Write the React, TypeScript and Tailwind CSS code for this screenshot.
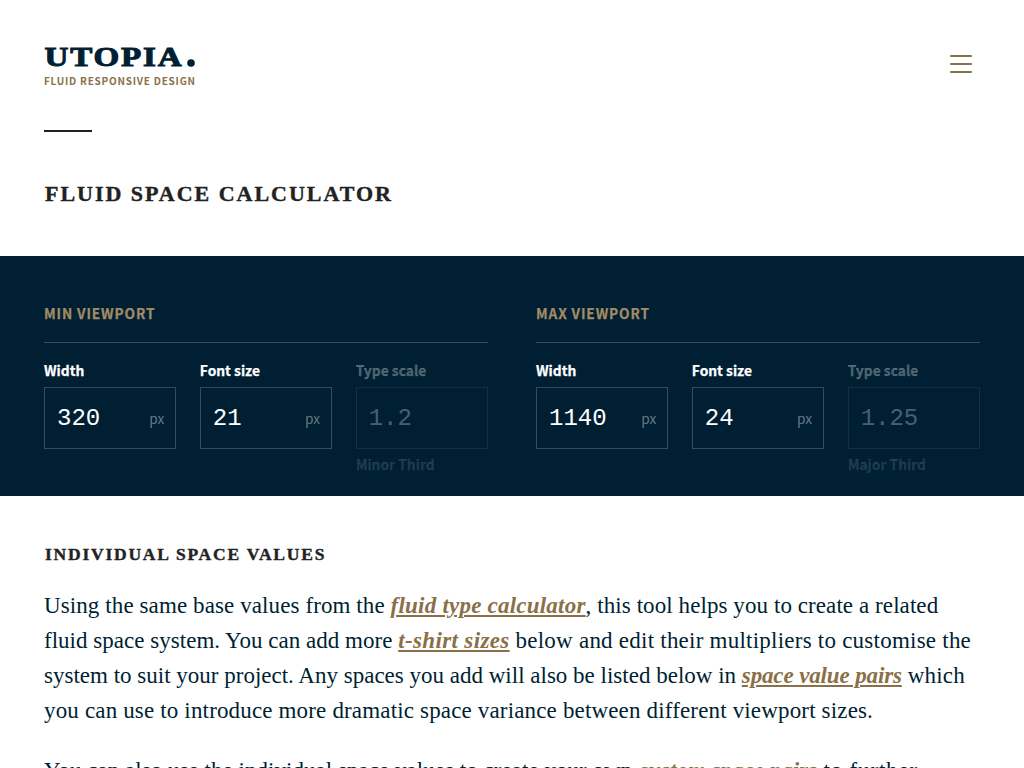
import type { ReactNode } from "react";

function Field({ label, value, unit, note, disabled }: { label: string; value: string; unit?: string; note?: string; disabled?: boolean }) {
  return (
    <div className="flex flex-col">
      <label className={disabled ? "h-[24px] text-[13.8px] leading-[24px] font-bold text-white/30 [-webkit-text-stroke:0.25px]" : "h-[24px] text-[13.8px] leading-[24px] font-bold text-white [-webkit-text-stroke:0.25px]"}>{label}</label>
      <div
        className={
          disabled
            ? "mt-[5px] flex h-[62px] items-center justify-between border border-white/8 pr-[11px] pl-3 text-white/30"
            : "mt-[5px] flex h-[62px] items-center justify-between border border-white/20 pr-[11px] pl-3 text-white"
        }
      >
        <span className="pt-px font-['Liberation_Mono',monospace] text-[24px] leading-[30px]">{value}</span>
        {unit && <span className="pb-px text-[13.7px] leading-[20px] text-white/40">{unit}</span>}
      </div>
      {note && <div className="mt-[3px] text-[13.8px] leading-[24px] font-bold text-white/12 [-webkit-text-stroke:0.25px]">{note}</div>}
    </div>
  );
}

function Viewport({ title, children }: { title: string; children: ReactNode }) {
  return (
    <section>
      <h3 className="h-[40px] border-b border-white/20 text-[13.7px] leading-[20px] font-bold tracking-[0.88px] text-[#a18c66] [-webkit-text-stroke:0.25px]">{title}</h3>
      <div className="mt-[15px] grid grid-cols-3 gap-[23.5px]">{children}</div>
    </section>
  );
}

function Link({ className, children }: { className: string; children: ReactNode }) {
  return (
    <a href="#" className={`font-bold italic text-[#8a7048] underline decoration-2 underline-offset-[2px] ${className}`}>
      {children}
    </a>
  );
}

export default function App() {
  return (
    <div className="h-[768px] overflow-hidden bg-white font-['Noto_Sans_CJK_SC','Noto_Sans',sans-serif] text-[#001f33]">
      <header className="flex h-[130px] justify-between pt-[44px] pr-[52px] pl-[44px]">
        <div className="flex flex-col">
          <svg width="153" height="26" viewBox="0 0 153 26" className="overflow-visible">
            <text x="0.5" y="22.2" textLength="139" lengthAdjust="spacingAndGlyphs" className="fill-[#001f33] stroke-[#001f33] stroke-[1] font-['Liberation_Serif',serif] text-[27px] font-bold tracking-[1.5px]">
              UTOPIA
            </text>
            <circle cx="147" cy="19" r="3.8" className="fill-[#001f33]" />
          </svg>
          <div className="mt-[3px] text-[10px] leading-[16px] font-bold tracking-[0.77px] whitespace-nowrap text-[#8a7048]">FLUID RESPONSIVE DESIGN</div>
        </div>
        <button aria-label="Menu" className="mt-[11px] flex h-[18px] w-[22px] flex-col gap-[6px]">
          <span className="h-[2px] w-full rounded-full bg-[#8a7048]" />
          <span className="h-[2px] w-full rounded-full bg-[#8a7048]" />
          <span className="h-[2px] w-full rounded-full bg-[#8a7048]" />
        </button>
      </header>
      <div className="ml-[44px] h-[2px] w-[48px] bg-[#222]" />
      <h1 className="mt-[46px] ml-[45px] h-[78px] font-['Liberation_Serif',serif] text-[22px] leading-[32px] font-bold tracking-[1.98px] text-[#222] [-webkit-text-stroke:0.4px]">FLUID SPACE CALCULATOR</h1>

      <div className="grid h-[240px] grid-cols-2 gap-12 bg-[#001f33] px-[44px] pt-[47px]">
        <Viewport title="MIN VIEWPORT">
          <Field label="Width" value="320" unit="px" />
          <Field label="Font size" value="21" unit="px" />
          <Field label="Type scale" value="1.2" note="Minor Third" disabled />
        </Viewport>
        <Viewport title="MAX VIEWPORT">
          <Field label="Width" value="1140" unit="px" />
          <Field label="Font size" value="24" unit="px" />
          <Field label="Type scale" value="1.25" note="Major Third" disabled />
        </Viewport>
      </div>

      <main className="px-[44px] pt-[43px] font-['Liberation_Serif',serif]">
        <h2 className="ml-px h-[49px] text-[17.5px] leading-[30px] font-bold tracking-[1.78px] text-[#222] [-webkit-text-stroke:0.4px]">INDIVIDUAL SPACE VALUES</h2>
        <div className="text-[23px] leading-[35px] whitespace-nowrap">
          <p>
            <span className="tracking-[0.1px]">Using the same base values from the </span>
            <Link className="tracking-[0.22px]">fluid type calculator</Link>
            <span className="tracking-[0.08px]">, this tool helps you to create a related</span>
            <br />
            <span className="tracking-[0.025px]">fluid space system. You can add more </span>
            <Link className="tracking-[0.36px]">t-shirt sizes</Link>
            <span className="tracking-[0.236px]"> below and edit their multipliers to customise the</span>
            <br />
            <span className="tracking-[0.003px]">system to suit your project. Any spaces you add will also be listed below in </span>
            <Link className="tracking-[-0.13px]">space value pairs</Link>
            <span className="tracking-[0.166px]"> which</span>
            <br />
            <span className="tracking-[0.16px]">you can use to introduce more dramatic space variance between different viewport sizes.</span>
          </p>
          <p className="mt-[25px]">
            <span className="tracking-[0.037px]">You can also use the individual space values to create your own </span>
            <Link className="tracking-[0px]">custom space pairs</Link>
            <span className="tracking-[0.82px]"> to further</span>
          </p>
        </div>
      </main>
    </div>
  );
}
